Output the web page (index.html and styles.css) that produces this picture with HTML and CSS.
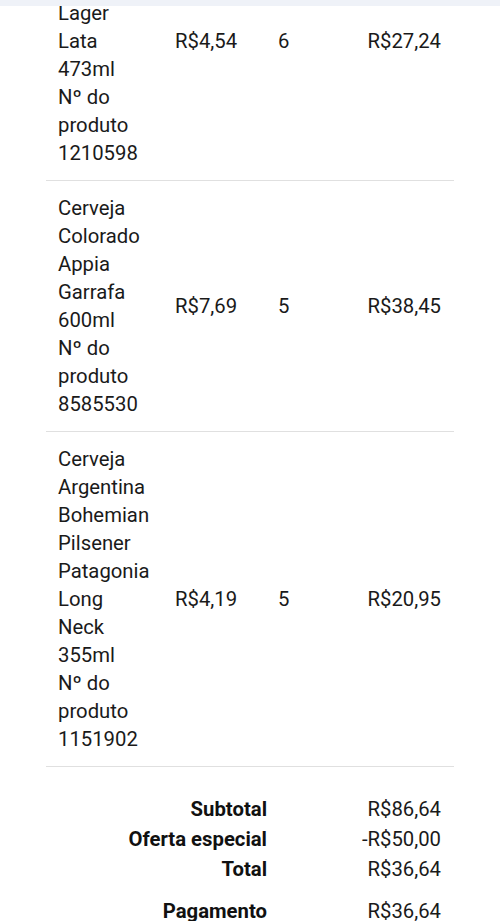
FILE: index.html
```html
<!DOCTYPE html>
<html lang="pt-BR">

<head>
    <meta charset="UTF-8">
    <title>Detalhes do pedido</title>
    <link rel="stylesheet" href="styles.css">
</head>

<body>

    <div class="topbar"></div>

    <main class="order">
        <h2 class="order-title">Itens do pedido</h2>

        <div class="items">
            <div class="item item-head">
                <div class="name">Produto</div>
                <div class="price">Preço</div>
                <div class="qty">Qtd</div>
                <div class="total">Total</div>
            </div>

            <div class="item" id="firstItem">
                <div class="name">
                    <div>Cerveja Stella Artois Lager Lata 473ml</div>
                    <div>Nº do produto 1210598</div>
                </div>
                <div class="price">R$4,54</div>
                <div class="qty">6</div>
                <div class="total">R$27,24</div>
            </div>

            <div class="item">
                <div class="name">
                    <div>Cerveja Colorado Appia Garrafa 600ml</div>
                    <div>Nº do produto 8585530</div>
                </div>
                <div class="price">R$7,69</div>
                <div class="qty">5</div>
                <div class="total">R$38,45</div>
            </div>

            <div class="item">
                <div class="name">
                    <div>Cerveja Argentina Bohemian Pilsener Patagonia Long Neck 355ml</div>
                    <div>Nº do produto 1151902</div>
                </div>
                <div class="price">R$4,19</div>
                <div class="qty">5</div>
                <div class="total">R$20,95</div>
            </div>
        </div>

        <div class="summary">
            <div class="sum-row">
                <div class="sum-label">Subtotal</div>
                <div class="sum-value">R$86,64</div>
            </div>
            <div class="sum-row">
                <div class="sum-label">Oferta especial</div>
                <div class="sum-value">-R$50,00</div>
            </div>
            <div class="sum-row">
                <div class="sum-label">Total</div>
                <div class="sum-value">R$36,64</div>
            </div>
            <div class="sum-row pay">
                <div class="sum-label">Pagamento</div>
                <div class="sum-value">R$36,64</div>
            </div>
        </div>
    </main>

    <script>
        // rola a página até a lista de itens
        const firstItem = document.getElementById('firstItem');
        const itemTop = firstItem.getBoundingClientRect().top + window.scrollY;
        window.scrollTo(0, itemTop + 98);
    </script>

</body>

</html>
```

FILE: styles.css
```css
body {
    margin: 0;
    font-family: Roboto, "Noto Sans", Arial, sans-serif;
    font-size: 20.3px;
    line-height: 28px;
    color: #1a1a1a;
    background: #fff;
}

.topbar {
    position: fixed;
    top: 0;
    left: 0;
    right: 0;
    height: 6px;
    background-color: #eff2f8;
    /* faixa do cabeçalho */
}

.order {
    padding: 20px 46px 24px;
}

.order-title {
    margin: 0 12px 16px;
    font-size: 22px;
}

.item {
    display: grid;
    grid-template-columns: 117px 103px 80px 1fr;
    align-items: center;
    padding: 13px 0;
    border-bottom: 1px solid #e0e0e0;
}

.item > div {
    padding: 0 12px;
}

.item .total {
    text-align: right;
    padding-right: 13px;
}

.item-head {
    font-weight: 700;
}

.summary {
    padding-top: 27px;
}

.sum-row {
    display: grid;
    grid-template-columns: 233px 1fr;
    line-height: 30px;
}

.sum-label {
    text-align: right;
    font-weight: 700;
    color: #111;
    padding-right: 12px;
}

.sum-value {
    text-align: right;
    padding-right: 13px;
}

.sum-row.pay {
    margin-top: 12px;
}
```
